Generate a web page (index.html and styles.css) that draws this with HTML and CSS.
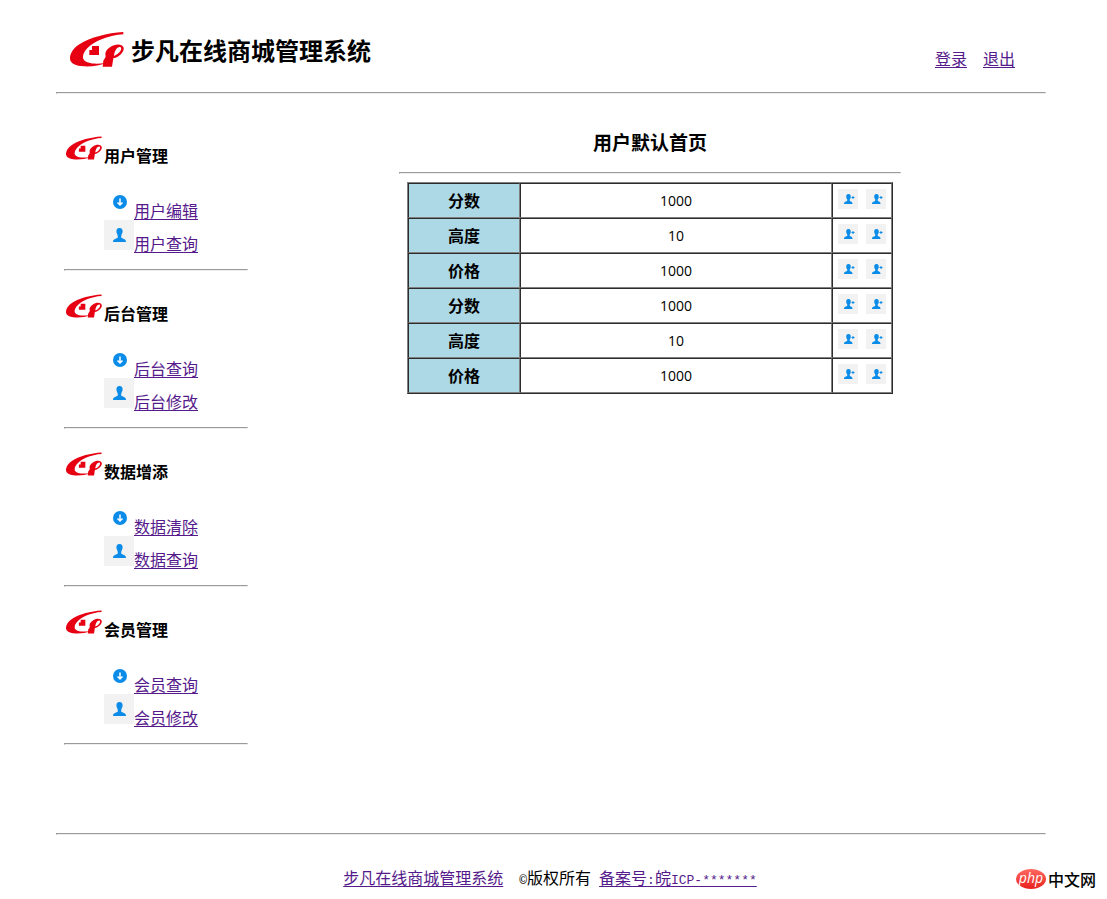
FILE: index.html
```html
<!DOCTYPE html>
<html lang="zh-CN">
<head>
<meta charset="utf-8">
<title>步凡在线商城管理系统</title>
<link rel="stylesheet" href="styles.css">
</head>
<body>
<svg class="sprite" aria-hidden="true">
  <symbol id="logo" viewBox="0 0 162 108">
    <path d="M160 0C112 3 61 16 28 37C8 50-1 67 0 81C2 95 17 102 42 103C68 104 91 100 106 93C78 97 48 96 40 81C34 64 55 39 89 24C112 14 139 8 160 7Z"/>
    <path d="M66 42H87V69H58V54H66Z"/>
    <path fill-rule="evenodd" d="M98 104L100 86C103 80 106 79 107 72C104 64 108 53 120 46C135 35 156 34 161 47C163 60 148 75 130 79L126 104ZM132 72C145 67 158 54 152 46C143 42 133 56 132 72Z"/>
  </symbol>
  <symbol id="down" viewBox="0 0 30 30">
    <circle cx="16" cy="15" r="7"/>
    <path d="M16 11.500V18M13.500 15.500L16 18L18.500 15.500" fill="none" stroke="#fff" stroke-width="1.500"/>
  </symbol>
  <symbol id="user" viewBox="0 0 30 30">
    <path d="M15.500 8C13 8 12 10 12.500 12.500C13 14 14 15 13.800 17.500C12.500 19 9 18.500 9 22H22C22 18.500 18.500 19 17.200 17.500C17 15 18 14 18.500 12.500C19 10 18 8 15.500 8Z"/>
  </symbol>
  <symbol id="add" viewBox="0 0 20 20">
    <path d="M10.500 5C8.500 5 8 6.500 8.300 8.500C8.500 10 9.500 10 9.300 11.500C8.500 13 6 12 6 15H14.500C14.500 12 12.500 13 11.700 11.500C11.500 10 12.500 10 12.700 8.500C13 6.500 12.500 5 10.500 5ZM13.500 8H14.500V7H15.500V8H16.500V9H15.500V10H14.500V9H13.500Z"/>
  </symbol>
</svg>
<div class="page">
  <header class="header">
    <h1 class="brand"><svg class="brand-logo"><use href="#logo"/></svg>步凡在线商城管理系统</h1>
    <nav class="account"><a href="#">登录</a><a href="#">退出</a></nav>
  </header>
  <hr>
  <div class="body">
    <aside class="sidebar">
      <section class="group">
        <h2 class="group-title"><svg class="group-logo"><use href="#logo"/></svg>用户管理</h2>
        <ul class="menu">
          <li><svg class="icon"><use href="#down"/></svg><a href="#">用户编辑</a></li>
          <li><svg class="icon shaded"><use href="#user"/></svg><a href="#">用户查询</a></li>
        </ul>
        <hr>
      </section>
      <section class="group">
        <h2 class="group-title"><svg class="group-logo"><use href="#logo"/></svg>后台管理</h2>
        <ul class="menu">
          <li><svg class="icon"><use href="#down"/></svg><a href="#">后台查询</a></li>
          <li><svg class="icon shaded"><use href="#user"/></svg><a href="#">后台修改</a></li>
        </ul>
        <hr>
      </section>
      <section class="group">
        <h2 class="group-title"><svg class="group-logo"><use href="#logo"/></svg>数据增添</h2>
        <ul class="menu">
          <li><svg class="icon"><use href="#down"/></svg><a href="#">数据清除</a></li>
          <li><svg class="icon shaded"><use href="#user"/></svg><a href="#">数据查询</a></li>
        </ul>
        <hr>
      </section>
      <section class="group">
        <h2 class="group-title"><svg class="group-logo"><use href="#logo"/></svg>会员管理</h2>
        <ul class="menu">
          <li><svg class="icon"><use href="#down"/></svg><a href="#">会员查询</a></li>
          <li><svg class="icon shaded"><use href="#user"/></svg><a href="#">会员修改</a></li>
        </ul>
        <hr>
      </section>
    </aside>
    <main class="main">
      <h2 class="main-title">用户默认首页</h2>
      <hr>
      <table class="data">
        <colgroup><col class="col-name"><col><col class="col-actions"></colgroup>
        <tbody>
        <tr><th scope="row">分数</th><td>1000</td><td><div class="actions"><svg><use href="#add"/></svg><svg><use href="#add"/></svg></div></td></tr>
        <tr><th scope="row">高度</th><td>10</td><td><div class="actions"><svg><use href="#add"/></svg><svg><use href="#add"/></svg></div></td></tr>
        <tr><th scope="row">价格</th><td>1000</td><td><div class="actions"><svg><use href="#add"/></svg><svg><use href="#add"/></svg></div></td></tr>
        <tr><th scope="row">分数</th><td>1000</td><td><div class="actions"><svg><use href="#add"/></svg><svg><use href="#add"/></svg></div></td></tr>
        <tr><th scope="row">高度</th><td>10</td><td><div class="actions"><svg><use href="#add"/></svg><svg><use href="#add"/></svg></div></td></tr>
        <tr><th scope="row">价格</th><td>1000</td><td><div class="actions"><svg><use href="#add"/></svg><svg><use href="#add"/></svg></div></td></tr>
        </tbody>
      </table>
    </main>
  </div>
  <hr>
  <footer class="footer">
    <a href="#">步凡在线商城管理系统</a>
    <span class="rights"><span class="latin">©</span>版权所有</span>
    <a href="#">备案号<span class="latin">:</span>皖<span class="latin">ICP-*******</span></a>
  </footer>
</div>
<div class="watermark"><span class="php">php</span><span>中文网</span></div>
</body>
</html>
```
FILE: styles.css
```css
* { box-sizing: border-box; }
body {
  margin: 0;
  background: #fff;
  color: #000;
  font: 400 16px/24px "Noto Sans CJK SC", sans-serif;
}
a { color: #551a8b; text-decoration: underline; text-underline-offset: 2px; }
hr { width: 100%; height: 2px; margin: 0; border: 1px solid; border-color: #9a9a9a #eee #eee #9a9a9a; }
h1, h2, ul { margin: 0; padding: 0; font-weight: 700; }
.sprite { display: none; }
.page { padding: 0 61px 0 56px; }
.header { display: flex; justify-content: space-between; height: 92px; padding: 28px 31px 0 14px; }
.brand { display: flex; align-items: center; gap: 7px; height: 44px; font-size: 24px; line-height: 32px; }
.brand-logo { width: 54px; height: 36px; fill: #e60012; }
.account { display: flex; align-items: center; gap: 16px; height: 60px; }
.body { display: flex; min-height: 739px; padding: 37px 2px 0 0; }
.sidebar { flex: none; width: 200px; padding: 0 8px; }
.group { padding-top: 5px; margin-bottom: 18px; }
.group-title { display: flex; gap: 2px; height: 55px; padding: 7px 0 0 2px; font-size: 16px; line-height: 24px; }
.group-logo { width: 36px; height: 25px; margin-top: -7px; fill: #e60012; }
.menu { list-style: none; padding-left: 40px; font-weight: 400; }
.menu li { display: flex; height: 33px; }
.menu a { margin-top: 7px; }
.icon { width: 30px; height: 30px; margin-top: -4px; fill: #0a8ce8; }
.shaded { background: #f2f2f2; }
.group hr { margin-top: 12px; }
.main { flex: none; width: 51%; max-width: 502px; margin: 0 auto; }
.main-title { height: 41px; font-size: 19px; line-height: 22px; text-align: center; }
.data { width: calc(100% - 16px); margin: 8px 8px 0; table-layout: fixed; border: 1px outset gray; border-spacing: 0; }
.data th, .data td { height: 35px; padding: 0; border: 1px inset gray; text-align: center; }
.data th { padding-bottom: 2px; background: lightblue; font-weight: 700; }
.data td { font-family: "Open Sans", sans-serif; font-size: 14px; }
.col-name { width: 112px; }
.col-actions { width: 60px; }
.actions { display: flex; justify-content: center; gap: 8px; padding-bottom: 3px; }
.actions svg { width: 20px; height: 20px; background: #f2f2f2; fill: #0a8ce8; }
.footer { display: flex; justify-content: center; gap: 8px; padding: 30px 2px 8px 0; }
.rights { padding-left: 8px; }
.latin { font: 13px/24px "Liberation Mono", monospace; }
.watermark { position: absolute; right: 11px; bottom: 8px; display: flex; align-items: center; gap: 2px; font-size: 16px; font-weight: 500; }
.php { width: 30px; height: 20px; border-radius: 50%; background: linear-gradient(#ff6a62, #e9201c); color: #fff; font: italic 14px/17px "Open Sans", sans-serif; text-align: center; }
```
